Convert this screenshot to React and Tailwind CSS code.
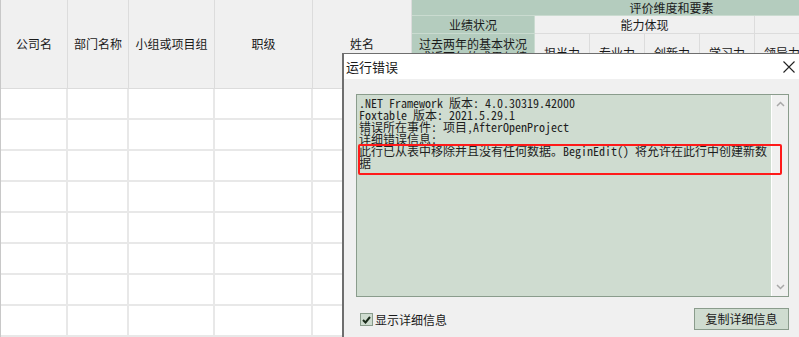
import React from "react";

const cjk = { fontFamily: '"Noto Sans CJK SC", "Microsoft YaHei", sans-serif' };
const mono = { fontFamily: '"Noto Sans Mono CJK SC", "Liberation Mono", "Noto Sans CJK SC", monospace' };

const cell = "border-r border-b border-[#dcdcdc]";
const green = "border-r border-b border-[#cadbd0] bg-[#b4ccbe]";

export default function App() {
  const bodyRows = Array.from({ length: 8 });
  const cols = 14;

  return (
    <div className="relative w-[799px] h-[337px] overflow-hidden bg-white text-[#1a1a1a]" style={cjk}>
      {/* background table */}
      <div className="grid w-[932px] border-l border-[#c8c8c8] grid-cols-[67px_61px_86px_98px_99px_123px_55px_55px_55px_55px_55px_55px_55px_12px] grid-rows-[16px_18px_55px_31px_31px_31px_31px_31px_31px_31px_31px] text-[12px]">
        <div className={`${cell} row-span-3 bg-[#f0f0f0] flex items-center justify-center`}>公司名</div>
        <div className={`${cell} row-span-3 bg-[#f0f0f0] flex items-center justify-center`}>部门名称</div>
        <div className={`${cell} row-span-3 bg-[#f0f0f0] flex items-center justify-center`}>小组或项目组</div>
        <div className={`${cell} row-span-3 bg-[#f0f0f0] flex items-center justify-center`}>职级</div>
        <div className={`${cell} row-span-3 bg-[#f0f0f0] flex items-center justify-center`}>姓名</div>
        <div className={`${green} col-span-9 flex items-center justify-center leading-none`}>评价维度和要素</div>

        <div className={`${green} flex items-center justify-center leading-none`}>业绩状况</div>
        <div className={`${cell} col-span-4 bg-[#f0f0f0] flex items-center justify-center leading-none`}>能力体现</div>
        <div className={`${cell} col-span-4 bg-[#f0f0f0]`}></div>

        <div className={`${green} px-[6px] pt-[3px] text-center leading-[13px]`}>
          过去两年的基本状况或近两年的成果与绩效评价
        </div>
        {["担当力", "专业力", "创新力", "学习力", "领导力", "协作力", "执行力", ""].map((t, i) => (
          <div key={i} className={`${cell} bg-[#f0f0f0] flex justify-center pt-[10px] whitespace-nowrap overflow-hidden`}>
            {t}
          </div>
        ))}

        {bodyRows.map((_, r) =>
          Array.from({ length: cols }).map((_, c) => (
            <div key={`${r}-${c}`} className="border-r-2 border-b-2 border-[#e8e8e8]"></div>
          ))
        )}
      </div>

      {/* error dialog */}
      <div className="absolute left-[342px] top-[53px] w-[461px] h-[300px] border-l-2 border-t border-[#6e6e6e] bg-[#f0f0f0]">
        <div className="h-[25px] bg-white flex items-center justify-between pl-[2px] pr-[8px]">
          <span className="text-[13px]">运行错误</span>
          <svg width="12" height="12" viewBox="0 0 12 12" className="text-[#222]">
            <path d="M0.5 0.5 L11.5 11.5 M11.5 0.5 L0.5 11.5" stroke="currentColor" strokeWidth="1.1" fill="none" />
          </svg>
        </div>

        <div className="pl-[12px] pt-[15px]">
          <div className="relative w-[433px] h-[203px] border border-[#8a9c8c] bg-[#cfdcd0] flex">
            <div className="flex-1 pl-[2px] pt-[2px] text-[12px] leading-[12px] text-[#1e1e1e] whitespace-nowrap" style={mono}>
              <div>.NET Framework 版本: 4.0.30319.42000</div>
              <div>Foxtable 版本: 2021.5.29.1</div>
              <div>错误所在事件: 项目,AfterOpenProject</div>
              <div>详细错误信息:</div>
              <div>此行已从表中移除并且没有任何数据。BeginEdit() 将允许在此行中创建新数</div>
              <div>据</div>
            </div>
            <div className="w-[17px] bg-[#f0f0f0] border-l border-white flex flex-col justify-between items-center py-[6px]">
              <svg width="9" height="6" viewBox="0 0 9 6">
                <path d="M1 5 L4.5 1.5 L8 5" stroke="#a8a8a8" strokeWidth="1.5" fill="none" />
              </svg>
              <svg width="9" height="6" viewBox="0 0 9 6">
                <path d="M1 1 L4.5 4.5 L8 1" stroke="#a8a8a8" strokeWidth="1.5" fill="none" />
              </svg>
            </div>
            {/* red highlight */}
            <div className="absolute left-[1px] top-[49px] w-[424px] h-[31px] border-2 border-[#ff1a1a] rounded-[2px]"></div>
          </div>

          <div className="w-[433px] flex items-start justify-between mt-[11px]">
            <label className="flex items-center gap-[2px] mt-[5px] ml-[4px]">
              <span className="w-[13px] h-[13px] border border-[#8a9c8c] bg-[#cfdcd0] flex items-center justify-center">
                <svg width="9" height="8" viewBox="0 0 9 8">
                  <path d="M1 4 L3.5 6.5 L8 1" stroke="#1a2a1a" strokeWidth="2" fill="none" />
                </svg>
              </span>
              <span className="text-[12px] leading-none">显示详细信息</span>
            </label>
            <button className="w-[95px] h-[22px] border border-[#8a9c8c] bg-[#cfdcd0] text-[12px] leading-none">
              复制详细信息
            </button>
          </div>
        </div>
      </div>
    </div>
  );
}
